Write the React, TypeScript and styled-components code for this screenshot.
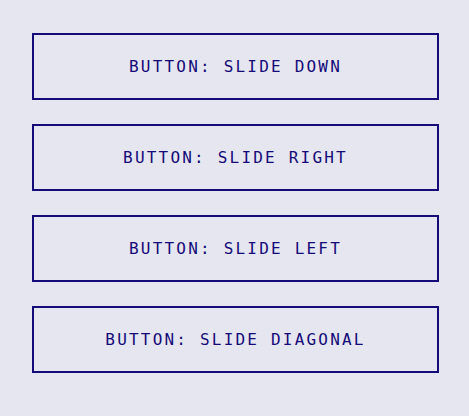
import * as React from "react";
import styled, { createGlobalStyle } from "styled-components";

const GlobalStyle = createGlobalStyle`
  html, body {
    margin: 0;
    padding: 0;
    background: #e6e6f0;
  }
`;

const Page = styled.div`
  display: flex;
  flex-direction: column;
  gap: 24px;
  padding: 33px 30px 33px 32px;
  min-height: 416px;
  box-sizing: border-box;
`;

const SlideButton = styled.button`
  width: 407px;
  height: 67px;
  box-sizing: border-box;
  border: 2px solid #140a78;
  background: transparent;
  color: #140a78;
  font-family: "DejaVu Sans Mono", "Liberation Mono", monospace;
  font-size: 16px;
  letter-spacing: 2.2px;
  text-transform: uppercase;
  padding: 0 0 1px;
  cursor: pointer;
`;

const labels = ["Slide Down", "Slide Right", "Slide Left", "Slide Diagonal"];

export default function App() {
  return (
    <>
      <GlobalStyle />
      <Page>
        {labels.map((l) => (
          <SlideButton key={l}>Button: {l}</SlideButton>
        ))}
      </Page>
    </>
  );
}
